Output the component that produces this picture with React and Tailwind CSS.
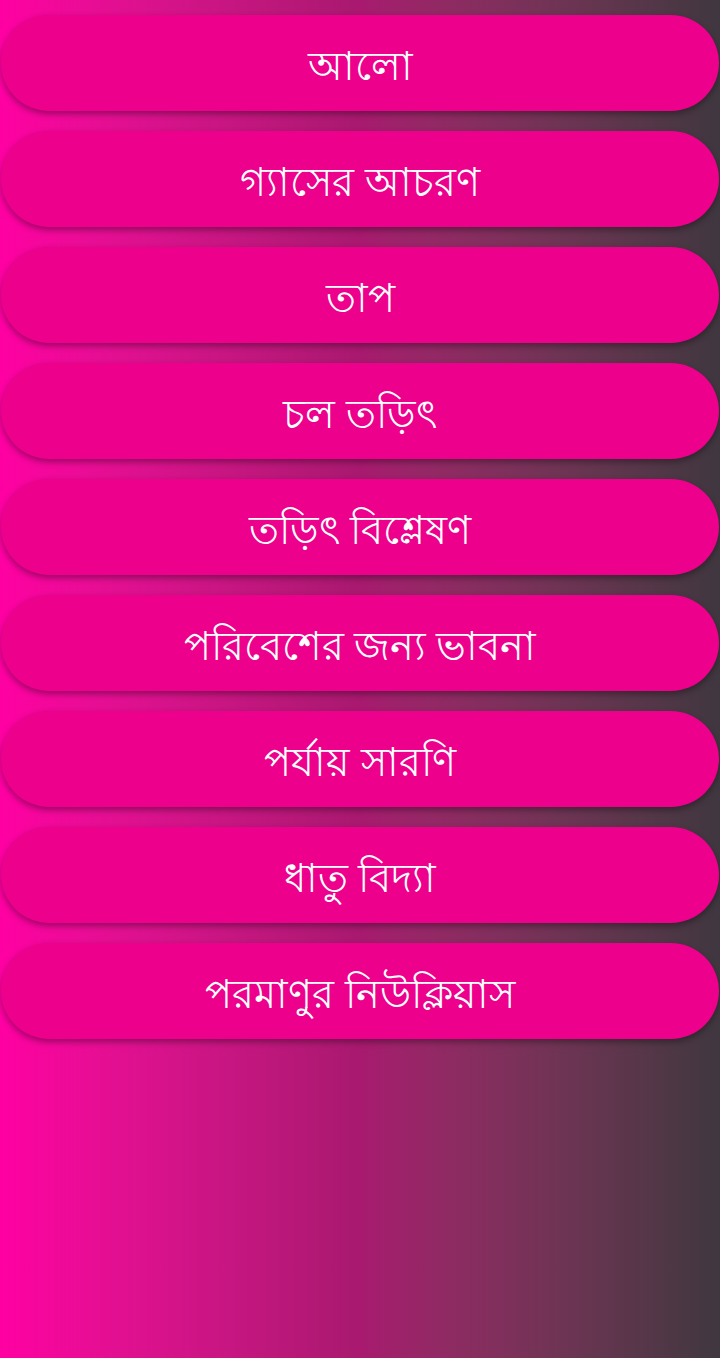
const topics = [
  "আলো",
  "গ্যাসের আচরণ",
  "তাপ",
  "চল তড়িৎ",
  "তড়িৎ বিশ্লেষণ",
  "পরিবেশের জন্য ভাবনা",
  "পর্যায় সারণি",
  "ধাতু বিদ্যা",
  "পরমাণুর নিউক্লিয়াস",
];

export default function App() {
  return (
    <div className="min-h-[1358px] w-[720px] bg-gradient-to-r from-[#ff00a2] via-[#a8196f] to-[#3f373f] pt-[15px] font-['Noto_Sans',sans-serif]">
      <div className="flex flex-col gap-[20px]">
        {topics.map((t) => (
          <button
            key={t}
            className="mx-px flex h-[96px] items-center justify-center rounded-[48px] bg-[#ec008c] pt-[4px] text-[40px] font-medium text-white shadow-[0_3px_6px_rgba(0,0,0,0.35)]"
          >
            {t}
          </button>
        ))}
      </div>
    </div>
  );
}
